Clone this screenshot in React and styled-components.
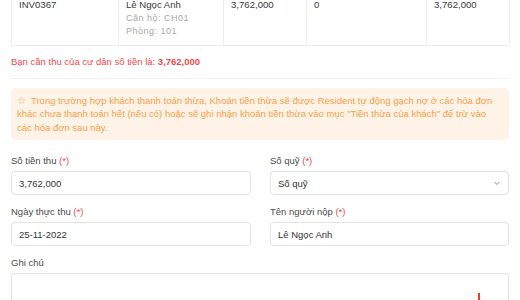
import styled, { createGlobalStyle } from "styled-components";

const GlobalStyle = createGlobalStyle`
  html, body {
    margin: 0;
    padding: 0;
    background: #ffffff;
    overflow: hidden;
  }
  body {
    font-family: "Liberation Sans", Arial, sans-serif;
    font-size: 9.5px;
    color: #333;
  }
`;

const Page = styled.div`
  width: 520px;
  height: 300px;
  overflow: hidden;
  padding: 0 11px;
  box-sizing: border-box;
`;

const Table = styled.div`
  display: grid;
  grid-template-columns: 107px 105px 83px 120px 83px;
  margin-top: -9px;
  border-left: 1px solid #eceef4;
  border-bottom: 1px solid #eceef4;
`;

const Cell = styled.div`
  border-right: 1px solid #eceef4;
  padding: 7px 7px 6px;
  font-size: 9.6px;
  line-height: 13.5px;
  color: #3a3a3a;
  min-height: 40px;
`;

const Sub = styled.div`
  font-size: 9px;
  letter-spacing: 0.5px;
  color: #a8a8a8;
  line-height: 13.5px;
`;

const DueText = styled.div`
  color: #ef4a4a;
  font-size: 9.5px;
  line-height: 14px;
  margin-top: 9px;

  b {
    font-weight: 700;
  }
`;

const Divider = styled.hr`
  border: none;
  border-top: 1px solid #f2f2f4;
  margin: 9px 0 9px;
`;

const Alert = styled.div`
  background: #fff3e7;
  border-radius: 4px;
  color: #f5a049;
  font-size: 9.5px;
  line-height: 13.5px;
  padding: 6px 14px 6px 6px;
`;

const Star = styled.span`
  margin-right: 5px;
`;

const FormGrid = styled.div`
  display: grid;
  grid-template-columns: 240px 239px;
  column-gap: 19px;
  margin-top: 14px;
`;

const Field = styled.div`
  display: flex;
  flex-direction: column;
  margin-bottom: 10px;
  grid-column: ${(p) => (p.$wide ? "1 / span 2" : "auto")};
`;

const Label = styled.label`
  font-size: 9.5px;
  line-height: 13px;
  color: #4a4a4a;
  margin-bottom: 4px;

  span {
    color: #ef4a4a;
  }
`;

const Input = styled.div`
  height: 24px;
  box-sizing: border-box;
  border: 1px solid #e3e3e3;
  border-radius: 4px;
  padding: 0 7px;
  display: flex;
  align-items: center;
  justify-content: space-between;
  font-size: 9.5px;
  color: #333;
`;

const TextArea = styled.div`
  position: relative;
  height: 40px;
  border: 1px solid #e3e3e3;
  border-radius: 4px;
`;

const Marker = styled.span`
  position: absolute;
  left: 466px;
  top: 19px;
  width: 2px;
  height: 8px;
  background: #f0392b;
`;

const Chevron = () => (
  <svg width="8" height="8" viewBox="0 0 8 8" fill="none">
    <path d="M1.5 3 L4 5.5 L6.5 3" stroke="#888" strokeWidth="1" />
  </svg>
);

export default function App() {
  return (
    <Page>
      <GlobalStyle />
      <Table>
        <Cell>INV0367</Cell>
        <Cell>
          Lê Ngọc Anh
          <Sub>Căn hộ: CH01</Sub>
          <Sub>Phòng: 101</Sub>
        </Cell>
        <Cell>3,762,000</Cell>
        <Cell>0</Cell>
        <Cell>3,762,000</Cell>
      </Table>
      <DueText>
        Bạn cần thu của cư dân số tiền là: <b>3,762,000</b>
      </DueText>
      <Divider />
      <Alert>
        <Star>☆</Star>Trong trường hợp khách thanh toán thừa, Khoán tiền thừa sẽ
        được Resident tự động gạch nợ ở các hóa đơn khác chưa thanh toán hết
        (nếu có) hoặc sẽ ghi nhận khoản tiền thừa vào mục "Tiền thừa của khách"
        để trừ vào các hóa đơn sau này.
      </Alert>
      <FormGrid>
        <Field>
          <Label>
            Số tiền thu <span>(*)</span>
          </Label>
          <Input>3,762,000</Input>
        </Field>
        <Field>
          <Label>
            Số quỹ <span>(*)</span>
          </Label>
          <Input>
            Số quỹ
            <Chevron />
          </Input>
        </Field>
        <Field>
          <Label>
            Ngày thực thu <span>(*)</span>
          </Label>
          <Input>25-11-2022</Input>
        </Field>
        <Field>
          <Label>
            Tên người nộp <span>(*)</span>
          </Label>
          <Input>Lê Ngọc Anh</Input>
        </Field>
        <Field $wide>
          <Label>Ghi chú</Label>
          <TextArea>
            <Marker />
          </TextArea>
        </Field>
      </FormGrid>
    </Page>
  );
}
